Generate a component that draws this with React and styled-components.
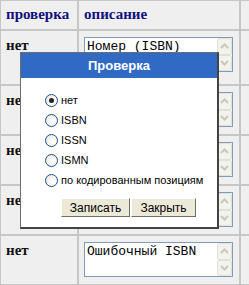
import React from 'react';
import styled, { createGlobalStyle } from 'styled-components';

const GlobalStyle = createGlobalStyle`
	html, body {
		margin: 0;
		padding: 0;
		background: #efefef;
		overflow: hidden;
	}
`;

const Page = styled.div`
	position: relative;
	width: 249px;
	height: 285px;
	overflow: hidden;
`;

const Table = styled.table`
	border-collapse: separate;
	border-spacing: 0;
	table-layout: fixed;
	width: 290px;
`;

const HeadCell = styled.th`
	text-align: left;
	vertical-align: top;
	height: 17px;
	padding: 5px 5px 6px 5px;
	border: 1px solid #c6c6c6;
	font-family: 'Liberation Serif', serif;
	font-size: 15px;
	font-weight: bold;
	color: #10107e;
`;

const Cell = styled.td`
	vertical-align: top;
	padding: ${({ $first }) => ($first ? '6px 5px 12px 5px' : '6px 5px 7px 5px')};
	border: 1px solid #c6c6c6;
	font-family: 'Liberation Serif', serif;
	font-size: 15px;
	font-weight: bold;
	color: #111;
	line-height: 17px;
`;

const TextBox = styled.div`
	display: flex;
	width: 147px;
	height: 33px;
	border: 1px solid #7f9db9;
	background: #fff;
`;

const BoxText = styled.div`
	flex: 1;
	padding: 1px 0 0 2px;
	font-family: 'Liberation Mono', monospace;
	font-size: 13px;
	font-weight: normal;
	line-height: 15px;
	color: #000;
	white-space: nowrap;
	overflow: hidden;
`;

const ScrollBar = styled.div`
	display: flex;
	flex-direction: column;
	width: 15px;
`;

const ScrollButton = styled.div`
	flex: 1;
	display: flex;
	align-items: center;
	justify-content: center;
	background: #f3f3ee;
	border: 1px solid #e2e1d9;
	border-radius: 2px;
`;

const Overlay = styled.div`
	position: absolute;
	left: 20px;
	top: 52px;
	width: 196px;
	background: #fff;
	border: 1px solid #6d6d6d;
	border-right: 2px solid #444;
	border-bottom: 2px solid #444;
	font-family: 'Liberation Sans', Arial, sans-serif;
`;

const TitleBar = styled.div`
	height: 25px;
	background: #316ac5;
	color: #fff;
	font-size: 13px;
	font-weight: bold;
	line-height: 25px;
	text-align: center;
`;

const Options = styled.div`
	display: flex;
	flex-direction: column;
	padding: 12px 0 0 24px;
`;

const Option = styled.label`
	display: flex;
	align-items: center;
	gap: 3px;
	height: 20px;
	font-size: 11px;
	color: #000;
	white-space: nowrap;
`;

const Radio = styled.span`
	position: relative;
	box-sizing: border-box;
	width: 13px;
	height: 13px;
	border-radius: 50%;
	border: 1px solid #1c5180;
	background: radial-gradient(circle at 65% 65%, #fff 0%, #e6e6de 100%);

	&::after {
		content: '';
		display: ${({ $checked }) => ($checked ? 'block' : 'none')};
		position: absolute;
		left: 3px;
		top: 3px;
		width: 5px;
		height: 5px;
		border-radius: 50%;
		background: #222;
	}
`;

const Buttons = styled.div`
	display: flex;
	gap: 1px;
	padding: 8px 0 10px 40px;
`;

const Button = styled.button`
	height: 19px;
	width: ${({ $width }) => $width}px;
	padding: 0;
	background: #ece9d8;
	border: 1px solid;
	border-color: #fff #716f64 #716f64 #fff;
	font-family: 'Liberation Sans', Arial, sans-serif;
	font-size: 12px;
	color: #000;
`;

const Chevron = ({ up }) => (
	<svg width="9" height="6" viewBox="0 0 9 6">
		<path
			d={up ? 'M1 5 L4.5 1.5 L8 5' : 'M1 1 L4.5 4.5 L8 1'}
			fill="none"
			stroke="#c9c7ba"
			strokeWidth="2"
		/>
	</svg>
);

const Field = ({ text }) => (
	<TextBox>
		<BoxText>{text}</BoxText>
		<ScrollBar>
			<ScrollButton>
				<Chevron up />
			</ScrollButton>
			<ScrollButton>
				<Chevron />
			</ScrollButton>
		</ScrollBar>
	</TextBox>
);

const rows = ['Номер (ISBN)', '', '', '', 'Ошибочный ISBN'];
const options = ['нет', 'ISBN', 'ISSN', 'ISMN', 'по кодированным позициям'];

export default function App() {
	return (
		<Page>
			<GlobalStyle />
			<Table>
				<colgroup>
					<col style={{ width: 78 }} />
					<col style={{ width: 162 }} />
					<col style={{ width: 50 }} />
				</colgroup>
				<thead>
					<tr>
						<HeadCell>проверка</HeadCell>
						<HeadCell>описание</HeadCell>
						<HeadCell />
					</tr>
				</thead>
				<tbody>
					{rows.map((text, i) => (
						<tr key={i}>
							<Cell $first={i === 0}>нет</Cell>
							<Cell $first={i === 0}>
								<Field text={text} />
							</Cell>
							<Cell $first={i === 0} />
						</tr>
					))}
				</tbody>
			</Table>
			<Overlay>
				<TitleBar>Проверка</TitleBar>
				<Options>
					{options.map((label, i) => (
						<Option key={label}>
							<Radio $checked={i === 0} />
							{label}
						</Option>
					))}
				</Options>
				<Buttons>
					<Button $width={69}>Записать</Button>
					<Button $width={65}>Закрыть</Button>
				</Buttons>
			</Overlay>
		</Page>
	);
}
